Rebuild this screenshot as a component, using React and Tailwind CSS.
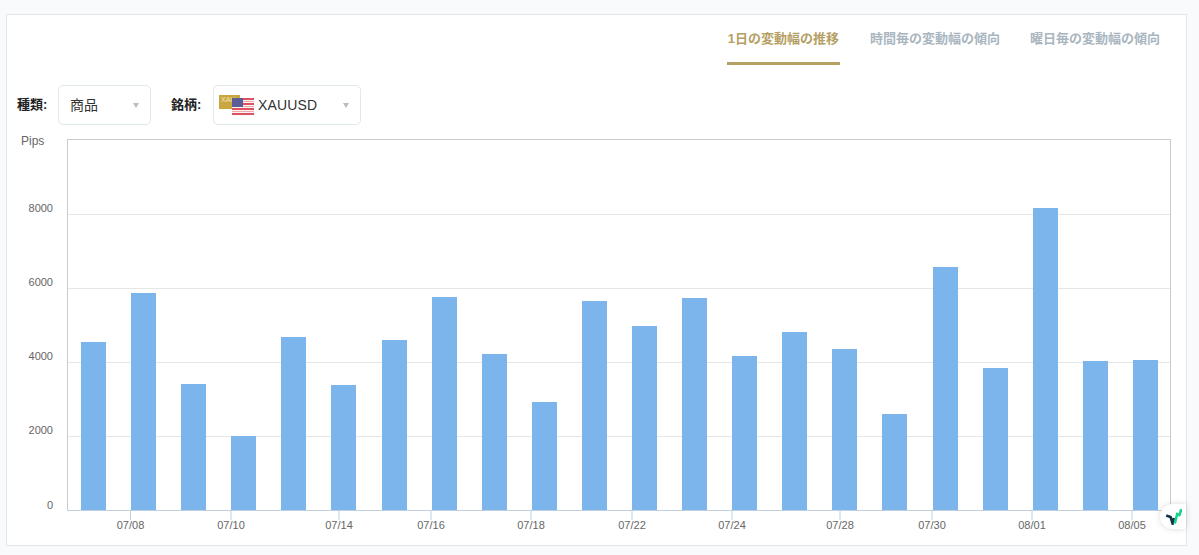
const bars = [342, 293, 384, 436, 337, 385, 340, 297, 354, 402, 301, 326, 298, 356, 332, 349, 414, 267, 368, 208, 361, 360];
const barX = [81, 131, 181, 231, 281, 331, 382, 432, 482, 532, 582, 632, 682, 732, 782, 832, 882, 933, 983, 1033, 1083, 1133];
const xLabels = [
  ["07/08", 130.5],
  ["07/10", 231],
  ["07/14", 339],
  ["07/16", 431],
  ["07/18", 531],
  ["07/22", 632],
  ["07/24", 732],
  ["07/28", 840],
  ["07/30", 932],
  ["08/01", 1032],
  ["08/05", 1132],
];
const yLabels = [
  ["8000", 214],
  ["6000", 288],
  ["4000", 362],
  ["2000", 436],
];

const Caret = () => <span className="w-0 h-0 border-x-[3px] border-x-transparent border-t-[5px] border-t-[#b4bec6]" />;

const PairIcon = () => (
  <svg width="36" height="20" viewBox="0 0 36 20" className="block">
    <rect x="0" y="0" width="21" height="14" fill="#c9a640" />
    <text x="2" y="7" fontSize="7" fill="#f3e6b8" fontFamily="Liberation Sans, sans-serif">XAU</text>
    <rect x="13" y="3" width="22" height="17" fill="#f7f4f4" />
    {[3, 8, 13, 18].map((y) => (
      <rect key={y} x="13" y={y} width="22" height="2" fill="#e0505f" />
    ))}
    <rect x="13" y="6" width="22" height="1" fill="#f0a9ae" />
    <rect x="13" y="11" width="22" height="1" fill="#f0a9ae" />
    <rect x="13" y="16" width="22" height="1" fill="#f0a9ae" />
    <rect x="13" y="3" width="11" height="9" fill="#5a5d96" />
  </svg>
);

const Chart = () => (
  <svg width="1179" height="406" viewBox="7 125 1179 406" className="block" fontFamily="Liberation Sans, Arial, sans-serif">
    <rect x="67.5" y="139.5" width="1103" height="371" fill="#fff" stroke="#c8cccc" />
    {yLabels.map(([t, y]) => (
      <g key={t}>
        <line x1="68" x2="1170" y1={y + 0.5} y2={y + 0.5} stroke="#e6e6e6" />
        <text x="53" y={y - 2} textAnchor="end" fontSize="11" fill="#666">{t}</text>
      </g>
    ))}
    <text x="53" y="509" textAnchor="end" fontSize="11" fill="#666">0</text>
    <text x="21" y="145" fontSize="12" fill="#666">Pips</text>
    {bars.map((top, i) => (
      <rect key={i} x={barX[i]} y={top} width="25" height={510 - top} fill="#7cb5ec" />
    ))}
    <line x1="67" x2="1171" y1="510.5" y2="510.5" stroke="#c0d0e0" />
    {xLabels.map(([t, x]) => (
      <g key={t}>
        <line x1={x} x2={x} y1="511" y2="520" stroke="#c0d0e0" />
        <text x={x} y="529" textAnchor="middle" fontSize="11" fill="#666">{t}</text>
      </g>
    ))}
  </svg>
);

const App = () => {
  return (
    <div className="w-[1199px] h-[555px] overflow-hidden bg-[#f9fafc] pt-[14px] pl-[6px]" style={{ fontFamily: '"Liberation Sans", "Noto Sans CJK JP", sans-serif' }}>
      <div className="relative w-[1181px] h-[532px] bg-white border border-[#dfe8ea]">
        <div className="flex justify-end gap-[30px] pr-[26px] h-[50px] text-[13px] font-bold text-[#a9b6bf]">
          <div className="w-[113px] text-center h-[50px] pt-[15px] leading-[18px] border-b-[3px] border-[#b5a064] text-[#b5a064]">1日の変動幅の推移</div>
          <div className="pt-[15px] leading-[18px]">時間毎の変動幅の傾向</div>
          <div className="pt-[15px] leading-[18px]">曜日毎の変動幅の傾向</div>
        </div>

        <div className="flex items-center mt-[20px] pl-[10px] h-[40px]">
          <span className="text-[13px] font-bold text-[#222] w-[41px]">種類:</span>
          <div className="w-[93px] h-[40px] border border-[#dfe8ea] rounded-[5px] flex items-center justify-between pl-[11px] pr-[11px]">
            <span className="text-[14px] text-[#333]">商品</span>
            <Caret />
          </div>
          <span className="text-[13px] font-bold text-[#222] ml-[20px] w-[42px]">銘柄:</span>
          <div className="w-[148px] h-[40px] border border-[#dfe8ea] rounded-[5px] flex items-center pl-[5px] pr-[11px]">
            <PairIcon />
            <span className="text-[14px] tracking-[0.15px] text-[#333] ml-[3px] flex-1">XAUUSD</span>
            <Caret />
          </div>
        </div>

        <Chart />

        <div className="absolute right-0 top-[489px] w-[26px] h-[25px] bg-white rounded-l-full shadow-[0_0_6px_rgba(0,0,0,0.15)] flex items-center justify-center">
          <svg width="18" height="16" viewBox="0 0 18 16">
            <path d="M2.2 6.5l4.4 1.6 2 6.4 1.4-5.5" fill="none" stroke="#16324a" strokeWidth="2.6" />
            <path d="M10.8 14.5l2.4-9.5 2.2 1 2-6" fill="none" stroke="#14d48c" strokeWidth="2.6" />
          </svg>
        </div>
      </div>
    </div>
  );
};

export default App;
